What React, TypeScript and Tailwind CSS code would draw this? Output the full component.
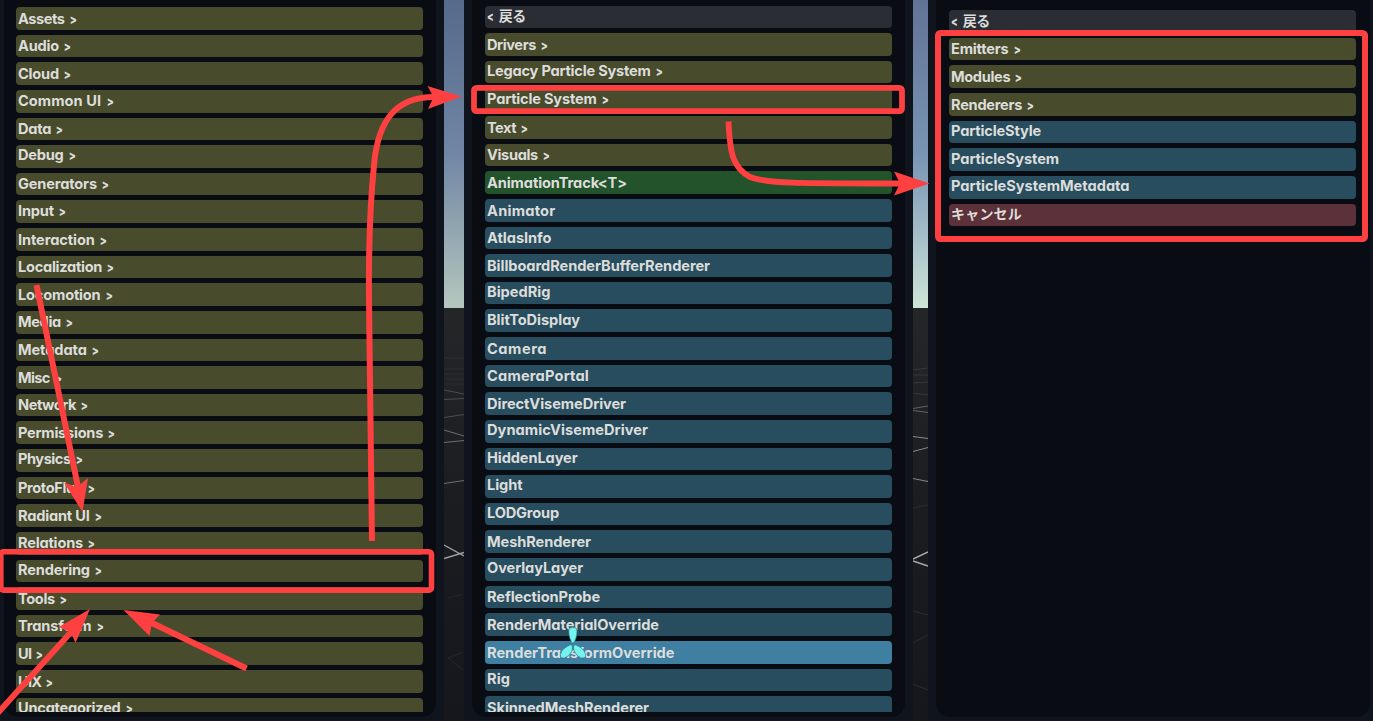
import { useLayoutEffect, useRef } from "react";
import { clsx } from "clsx";

type Kind = "folder" | "item" | "generic" | "back" | "active" | "cancel";
type Entry = { label: string; width: number; kind: Kind };

const make = (kind: Kind, rows: [string, number][]): Entry[] =>
  rows.map(([label, width]) => ({ label, width, kind }));

const categories: Entry[] = make("folder", [
  ["Assets", 58], ["Audio", 53], ["Cloud", 53], ["Common UI", 95.5], ["Data", 45],
  ["Debug", 57.5], ["Generators", 91], ["Input", 48], ["Interaction", 89],
  ["Localization", 96], ["Locomotion", 94.5], ["Media", 54.5], ["Metadata", 81],
  ["Misc", 43], ["Network", 69.5], ["Permissions", 97], ["Physics", 64],
  ["ProtoFlux", 76.5], ["Radiant UI", 83.5], ["Relations", 77], ["Rendering", 84],
  ["Tools", 48.5], ["Transform", 85.5], ["UI", 24], ["UIX", 34], ["Uncategorized", 114.5],
]);

const rendering: Entry[] = [
  ...make("back", [["戻る", 38]]),
  ...make("folder", [
    ["Drivers", 60.5], ["Legacy Particle System", 175.5], ["Particle System", 121.5],
    ["Text", 40.5], ["Visuals", 62.5],
  ]),
  ...make("generic", [["AnimationTrack<T>", 139]]),
  ...make("item", [
    ["Animator", 67.5], ["AtlasInfo", 63.5], ["BillboardRenderBufferRenderer", 222],
    ["BipedRig", 62.5], ["BlitToDisplay", 92], ["Camera", 59], ["CameraPortal", 101],
    ["DirectVisemeDriver", 138], ["DynamicVisemeDriver", 160], ["HiddenLayer", 89.5],
    ["Light", 34.5], ["LODGroup", 71], ["MeshRenderer", 103], ["OverlayLayer", 95],
    ["ReflectionProbe", 112], ["RenderMaterialOverride", 171],
  ]),
  ...make("active", [["RenderTransformOverride", 186.5]]),
  ...make("item", [["Rig", 22], ["SkinnedMeshRenderer", 161]]),
];

const particles: Entry[] = [
  ...make("back", [["戻る", 38]]),
  ...make("folder", [["Emitters", 69.5], ["Modules", 71], ["Renderers", 83]]),
  ...make("item", [["ParticleStyle", 89], ["ParticleSystem", 107], ["ParticleSystemMetadata", 177.5]]),
  ...make("cancel", [["キャンセル", 70]]),
];

const fills: Record<Kind, string> = {
  folder: "bg-[#484b2c]",
  item: "bg-[#284d5f]",
  generic: "bg-[#23532b]",
  back: "bg-[#2b2d35]",
  active: "bg-[#3f7fa1]",
  cancel: "bg-[#5d3139]",
};

function Row({ label, width, kind }: Entry) {
  const ref = useRef<HTMLSpanElement>(null);

  // Spread the letters so that the label takes its nominal width.
  useLayoutEffect(() => {
    const el = ref.current;
    if (!el) return;
    el.style.letterSpacing = "0px";
    const natural = el.getBoundingClientRect().width;
    const count = (el.textContent ?? "").length;
    const extra = kind === "folder" ? 0 : 1;
    el.style.letterSpacing = `${(width + extra - natural) / count}px`;
  }, [width, kind]);

  const descends = /[gpy]/.test(label);
  const japanese = kind === "back" || kind === "cancel";
  return (
    <div className={clsx("h-[22.63px] w-full shrink-0 rounded-[4px] pl-[2px]", fills[kind])}>
      <span
        ref={ref}
        className={clsx(
          "inline-block whitespace-pre align-top leading-[20px] text-[#dcddda] [font-feature-settings:'cv11']",
          japanese ? "text-[14px] font-bold" : "text-[14.6px] font-bold",
          japanese ? "mt-[0.8px]" : descends ? "mt-[0.2px]" : "mt-[1.6px]",
        )}
      >
        {kind === "back" && (
          <><span className="inline-block origin-left scale-x-75 text-[13px] font-extrabold leading-none">&lt;</span>{" "}</>
        )}
        {label}
        {kind === "folder" && (
          <>{" "}<span className="inline-block origin-right scale-x-[.8] text-[13px] font-extrabold leading-none">&gt;</span></>
        )}
      </span>
    </div>
  );
}

function Panel({ rows, className, pad }: { rows: Entry[]; className: string; pad: string }) {
  return (
    <section className={clsx("h-[721px] shrink-0 bg-[#11151c]/95", className)}>
      <div className="h-[717px] rounded-b-[14px] bg-[#0a0c13]">
        <div className={clsx("flex h-[711.7px] flex-col gap-[5px] overflow-hidden", pad)}>
          {rows.map((row) => (
            <Row key={row.label} {...row} />
          ))}
        </div>
      </div>
    </section>
  );
}

function Gap({ wide }: { wide?: boolean }) {
  return (
    <div className={clsx("flex h-[721px] shrink-0 flex-col", wide ? "w-[20px]" : "w-[15px]")}>
      <div
        className={clsx(
          "h-[308px] bg-linear-to-b",
          wide
            ? "from-[#566b8b] via-[#7186a4] via-50% to-[#b5c7bd]"
            : "from-[#627397] via-[#7894b5] via-50% to-[#cfe5d8]",
        )}
      />
      <div className="flex-1 bg-linear-to-b from-[#252628] via-[#1b1c20] via-50% to-[#15171d]">
        {wide ? (
          <svg className="block" width="20" height="413" viewBox="0 0 20 413" fill="none">
            <path d="M0 50h20M0 61h20M0 66h20M0 71h20M0 76h20" stroke="#343537" strokeWidth=".6" />
            <path d="M0 82l20 4M0 91.500l20-1M0 109.500l20-3" stroke="#55575a" strokeWidth=".8" />
            <path d="M0 122l20 6M0 134.500l20-2M0 175.500l20-3" stroke="#74777a" strokeWidth=".9" />
            <path d="M0 237l20 11M0 250.500l20-6" stroke="#9ea1a4" strokeWidth="1.4" />
            <path d="M4 290l15-4M19 344L4 350l15 12" stroke="#26282b" strokeWidth="1" />
          </svg>
        ) : (
          <svg className="block" width="15" height="413" viewBox="0 0 15 413" fill="none">
            <path d="M0 62l15-2M0 67h15M0 75l15-1M0 85.500l15 1" stroke="#3f4042" strokeWidth=".7" />
            <path d="M0 100.500l15-2.500M0 102.500l15 2" stroke="#68696b" strokeWidth=".9" />
            <path d="M0 128.500l15 2M0 143.500l15-4M0 170.500l15 3" stroke="#858789" strokeWidth="1" />
            <path d="M0 251l15-7M0 253l15 5" stroke="#aaacae" strokeWidth="1.500" />
            <path d="M0 200l15-3M0 303l15 4M0 335l15-8M0 376l15 6" stroke="#2b2d30" strokeWidth="1" />
          </svg>
        )}
      </div>
    </div>
  );
}

function Annotations() {
  return (
    <svg className="pointer-events-none absolute inset-0" width="1373" height="721" viewBox="0 0 1373 721" fill="none">
      <g fill="#74f3ed" stroke="#1b6f80" strokeWidth=".6">
        <path d="M569 628.500Q572.800 626 576.600 628.500Q578 634 574.500 642Q572.900 644 571.300 642Q567.800 634 569 628.500Z" />
        <path d="M571 644.500Q573.500 646 572 651Q569.500 656.500 564.500 658Q560 658.500 560.300 654.500Q562 648 571 644.500Z" />
        <path d="M575 644.500Q572.500 646 574 651Q576.500 656.500 581.500 658Q586 658.500 585.700 654.500Q584 648 575 644.500Z" />
      </g>
      <g stroke="#ff4040" strokeWidth="6">
        <path d="M372 541L369 300C368.500 245 370 205 374 165C378 120 396 97 434 97" />
        <path d="M728.500 121.500C730 154 733 168 750 177C768 184 805 183.500 901 183.500" strokeWidth="5.800" />
        <path d="M36.500 285L78 487" />
        <path d="M-3 714L72 631" strokeWidth="5.800" />
        <path d="M246.500 668.500L151 622.500" />
        <rect x="0.800" y="551.800" width="430.700" height="38.300" rx="2.500" strokeWidth="5.600" />
        <rect x="474" y="87.800" width="428" height="23.400" rx="2.500" strokeWidth="5.800" />
        <rect x="938" y="33" width="427" height="206" rx="2.500" />
      </g>
      <g fill="#ff4040">
        <path d="M461.500 96.500L427.500 86L433.500 97L428 109Z" />
        <path d="M929.500 183.500L894 171.500L900 183.500L894 195.500Z" />
        <path d="M82.500 512L64 482.500L77 487L88 478Z" />
        <path d="M90 609L59 627L71 632.500L75.500 643Z" />
        <path d="M123.500 610L160 614.500L152 623L149.500 636Z" />
      </g>
    </svg>
  );
}

export default function App() {
  return (
    <main className="relative flex h-[721px] w-[1373px] overflow-hidden bg-[#101219] font-['Inter','Noto_Sans_CJK_JP',sans-serif]">
      <Panel rows={categories} className="w-[444px] pl-[4px] pr-[8px]" pad="pt-[7px] pl-[12px] pr-[13px]" />
      <Gap wide />
      <Panel rows={rendering} className="w-[449px] px-[8px]" pad="pt-[5.600px] pl-[13px] pr-[13px]" />
      <Gap />
      <Panel rows={particles} className="w-[445px] pl-[8px] pr-[3px]" pad="pt-[10.200px] pl-[13px] pr-[14px]" />
      <Annotations />
    </main>
  );
}
